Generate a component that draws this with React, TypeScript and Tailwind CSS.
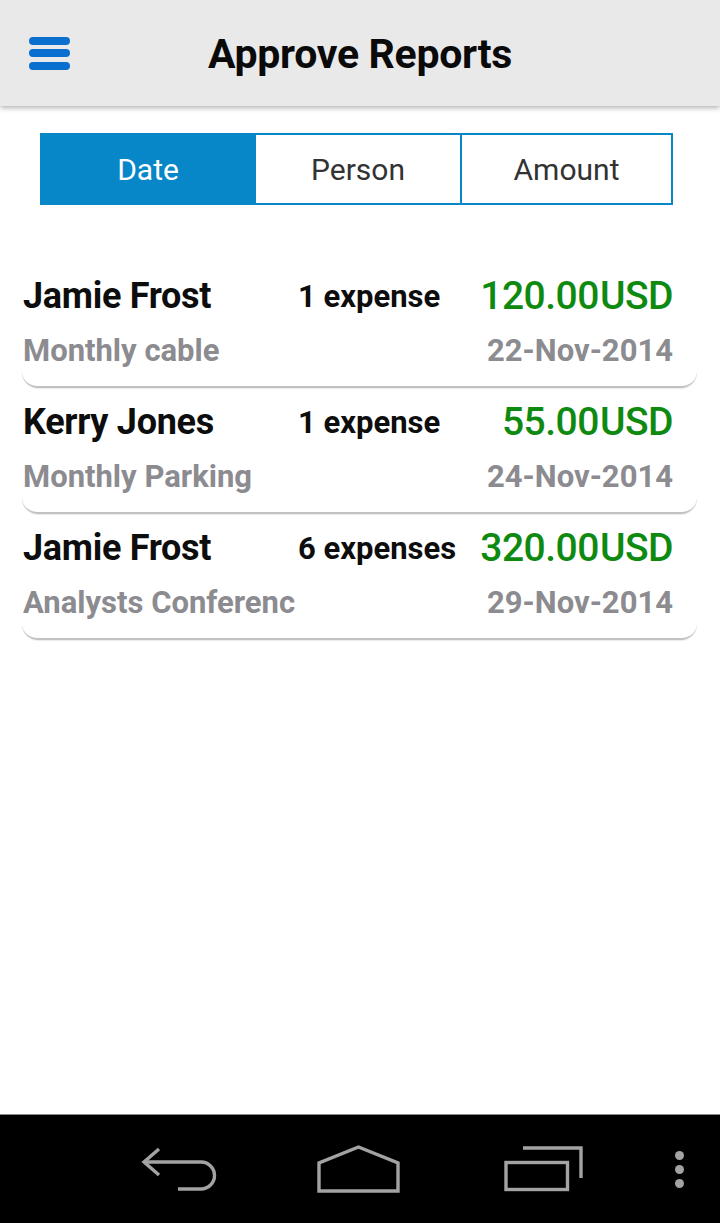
import React from "react";

const reports = [
  { name: "Jamie Frost", count: "1 expense", amount: "120.00", memo: "Monthly cable", date: "22-Nov-2014" },
  { name: "Kerry Jones", count: "1 expense", amount: "55.00", memo: "Monthly Parking", date: "24-Nov-2014" },
  { name: "Jamie Frost", count: "6 expenses", amount: "320.00", memo: "Analysts Conferenc", date: "29-Nov-2014" },
];

const tabs = ["Date", "Person", "Amount"];

function NavIcons() {
  return (
    <div className="flex items-center h-full">
      {/* Back */}
      <svg className="ml-[141px]" width="78" height="44" viewBox="0 0 78 44" fill="none" stroke="#a3a3a3" strokeWidth="3.4">
        <path d="M18 2 L3 15 L18 28" strokeLinejoin="miter" />
        <path d="M3 15 H60 A13.5 13.5 0 0 1 60 42 H37" />
      </svg>
      {/* Home */}
      <svg className="ml-[98px]" width="84" height="48" viewBox="0 0 84 48" fill="none" stroke="#a3a3a3" strokeWidth="3.4">
        <path d="M2 46 V18 L41.5 2 L81 18 V46 Z" strokeLinejoin="miter" />
      </svg>
      {/* Recent */}
      <svg className="ml-[103px]" width="80" height="46" viewBox="0 0 80 46" fill="none" stroke="#a3a3a3" strokeWidth="3.4">
        <rect x="2" y="16.5" width="61.5" height="27" />
        <path d="M19 2 H77 V32" />
      </svg>
      {/* Overflow */}
      <div className="ml-[91px] flex flex-col gap-[5px]">
        <span className="w-[9px] h-[9px] rounded-full bg-[#a3a3a3]" />
        <span className="w-[9px] h-[9px] rounded-full bg-[#a3a3a3]" />
        <span className="w-[9px] h-[9px] rounded-full bg-[#a3a3a3]" />
      </div>
    </div>
  );
}

export default function App() {
  return (
    <div className="h-[1223px] w-[720px] flex flex-col bg-white font-['Roboto',sans-serif] overflow-hidden">
      {/* Header */}
      <header className="relative z-10 h-[106px] flex-shrink-0 bg-[#e9e9e9] shadow-[0_2px_5px_rgba(0,0,0,0.3)] grid grid-cols-[1fr_auto_1fr] items-center">
        <button className="ml-[29px] w-[41px] flex flex-col gap-[4.5px]" aria-label="Menu">
          <span className="h-[8px] rounded-full bg-[#0b6fcf]" />
          <span className="h-[8px] rounded-full bg-[#0b6fcf]" />
          <span className="h-[8px] rounded-full bg-[#0b6fcf]" />
        </button>
        <h1 className="text-[41px] font-bold text-[#0a0a0a] tracking-[-0.3px] pt-[4px]">Approve Reports</h1>
        <div />
      </header>

      <main className="flex-1">
        {/* Sort switcher */}
        <div className="ml-[40px] mt-[27px] w-[633px] h-[72px] grid grid-cols-[212px_206px_211px] border-2 border-[#0786c8]">
          {tabs.map((t, i) => (
            <div
              key={t}
              className={[
                "flex items-center justify-center text-[30px]",
                i === 0 ? "bg-[#0786c8] text-white" : "bg-white text-[#333] border-l-2 border-[#0786c8] shadow-[inset_2px_0_0_#fff]",
              ].join(" ")}
            >
              {t}
            </div>
          ))}
        </div>

        {/* Reports */}
        <ul className="mt-[57px] ml-[22px] w-[675px]">
          {reports.map((r, i) => (
            <li
              key={i}
              className="h-[126px] pt-[14px] pl-[1px] pr-[24px] rounded-b-[16px] border-b-[2px] border-[#c2c2c2] shadow-[0_1px_1px_rgba(0,0,0,0.08)]"
            >
              <div className="flex items-center h-[40px]">
                <span className="w-[275px] text-[36px] font-bold text-[#0d0d0d] leading-none tracking-[-0.3px]">{r.name}</span>
                <span className="flex-1 text-[31px] font-bold text-[#0d0d0d] leading-none">{r.count}</span>
                <span className="w-[124px] text-right text-[39px] font-medium text-[#0f8a10] leading-none tracking-[-0.5px]">{r.amount}</span>
                <span className="ml-[1px] text-[39px] font-medium text-[#0f8a10] leading-none tracking-[-0.5px]">USD</span>
              </div>
              <div className="flex items-center justify-between h-[36px] mt-[16px]">
                <span className="text-[31px] font-bold text-[#8b8b90] leading-none">{r.memo}</span>
                <span className="text-[31px] font-bold text-[#8b8b90] leading-none">{r.date}</span>
              </div>
            </li>
          ))}
        </ul>
      </main>

      {/* Android nav bar */}
      <footer className="h-[109px] flex-shrink-0 bg-black border-t-[1px] border-[#8a8a8a]">
        <NavIcons />
      </footer>
    </div>
  );
}
